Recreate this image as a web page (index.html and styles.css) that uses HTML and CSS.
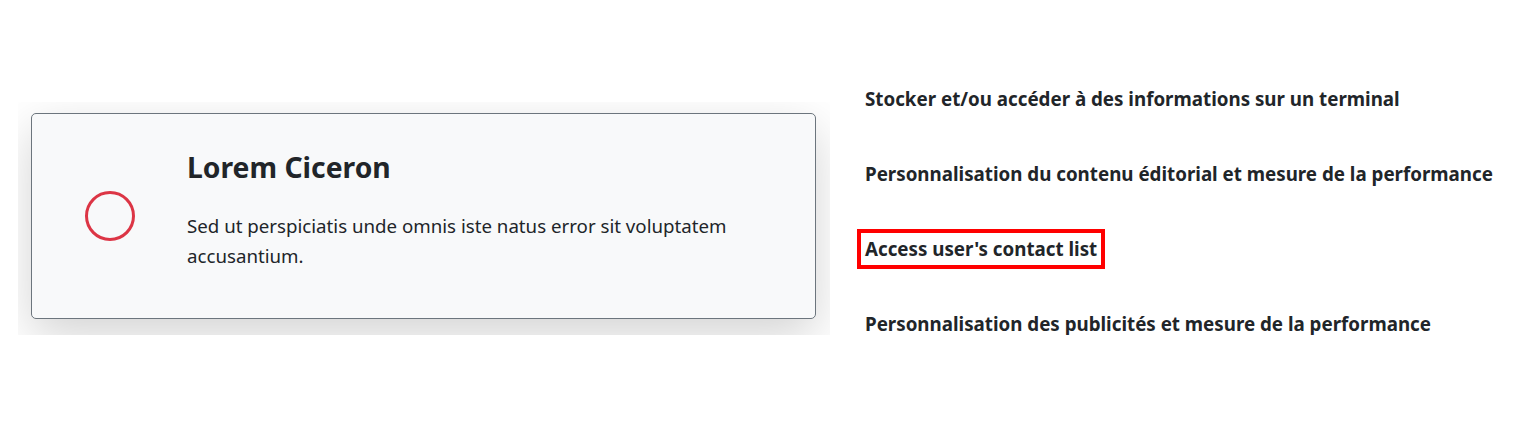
FILE: index.html
```html
<!DOCTYPE html>
<html lang="fr">
<head>
<meta charset="utf-8">
<title>Lorem Ciceron</title>
<link rel="stylesheet" href="styles.css">
</head>
<body>
<main class="layout">
  <section class="card-frame">
    <div class="card">
      <div class="card-icon">
        <svg width="52" height="52" viewBox="0 0 52 52" aria-hidden="true">
          <circle cx="26" cy="26" r="23.5" fill="none" stroke="#dc3545" stroke-width="3"/>
        </svg>
      </div>
      <div class="card-body">
        <h3 class="card-title">Lorem Ciceron</h3>
        <p class="card-text">Sed ut perspiciatis unde omnis iste natus error sit voluptatem accusantium.</p>
      </div>
    </div>
  </section>
  <ul class="purposes">
    <li class="purpose"><span class="purpose-label">Stocker et/ou accéder à des informations sur un terminal</span></li>
    <li class="purpose"><span class="purpose-label">Personnalisation du contenu éditorial et mesure de la performance</span></li>
    <li class="purpose"><span class="purpose-label is-highlighted">Access user's contact list</span></li>
    <li class="purpose"><span class="purpose-label">Personnalisation des publicités et mesure de la performance</span></li>
  </ul>
</main>
</body>
</html>
```

FILE: styles.css
```css
html, body {
  margin: 0;
  padding: 0;
  background: #ffffff;
}

body {
  font-family: "Noto Sans", "Open Sans", sans-serif;
  color: #212529;
}

.layout {
  display: flex;
  align-items: flex-start;
  padding: 0 0 0 18px;
}

.card-frame {
  width: 785px;
  margin-top: 102px;
  padding: 11px 14px 16px 13px;
  overflow: hidden;
  flex: none;
}

.card {
  display: flex;
  align-items: center;
  height: 206px;
  box-sizing: border-box;
  background: #f8f9fa;
  border: 1px solid #6c757d;
  border-radius: 5px;
  box-shadow: 0 1rem 3rem rgba(0, 0, 0, 0.175);
}

.card-icon {
  display: flex;
  justify-content: center;
  width: 52px;
  margin: 0 51px 0 52px;
  flex: none;
}

.card-body {
  padding-bottom: 11px;
}

.card-title {
  margin: 0 0 27px;
  font-size: 28.3px;
  font-weight: 700;
  line-height: 34px;
}

.card-text {
  margin: 0;
  font-size: 18.7px;
  line-height: 30px;
}

.purposes {
  list-style: none;
  margin: 0 0 0 35px;
  padding: 88px 0 0;
  display: flex;
  flex-direction: column;
  gap: 53px;
}

.purpose {
  display: flex;
  align-items: flex-start;
}

.purpose-label {
  font-size: 18.75px;
  font-weight: 700;
  line-height: 22px;
}

.purpose-label.is-highlighted {
  outline: 4px solid #ff0000;
  padding: 5px 4px 5px 4px;
  margin: -5px 0 -5px -4px;
}
```
